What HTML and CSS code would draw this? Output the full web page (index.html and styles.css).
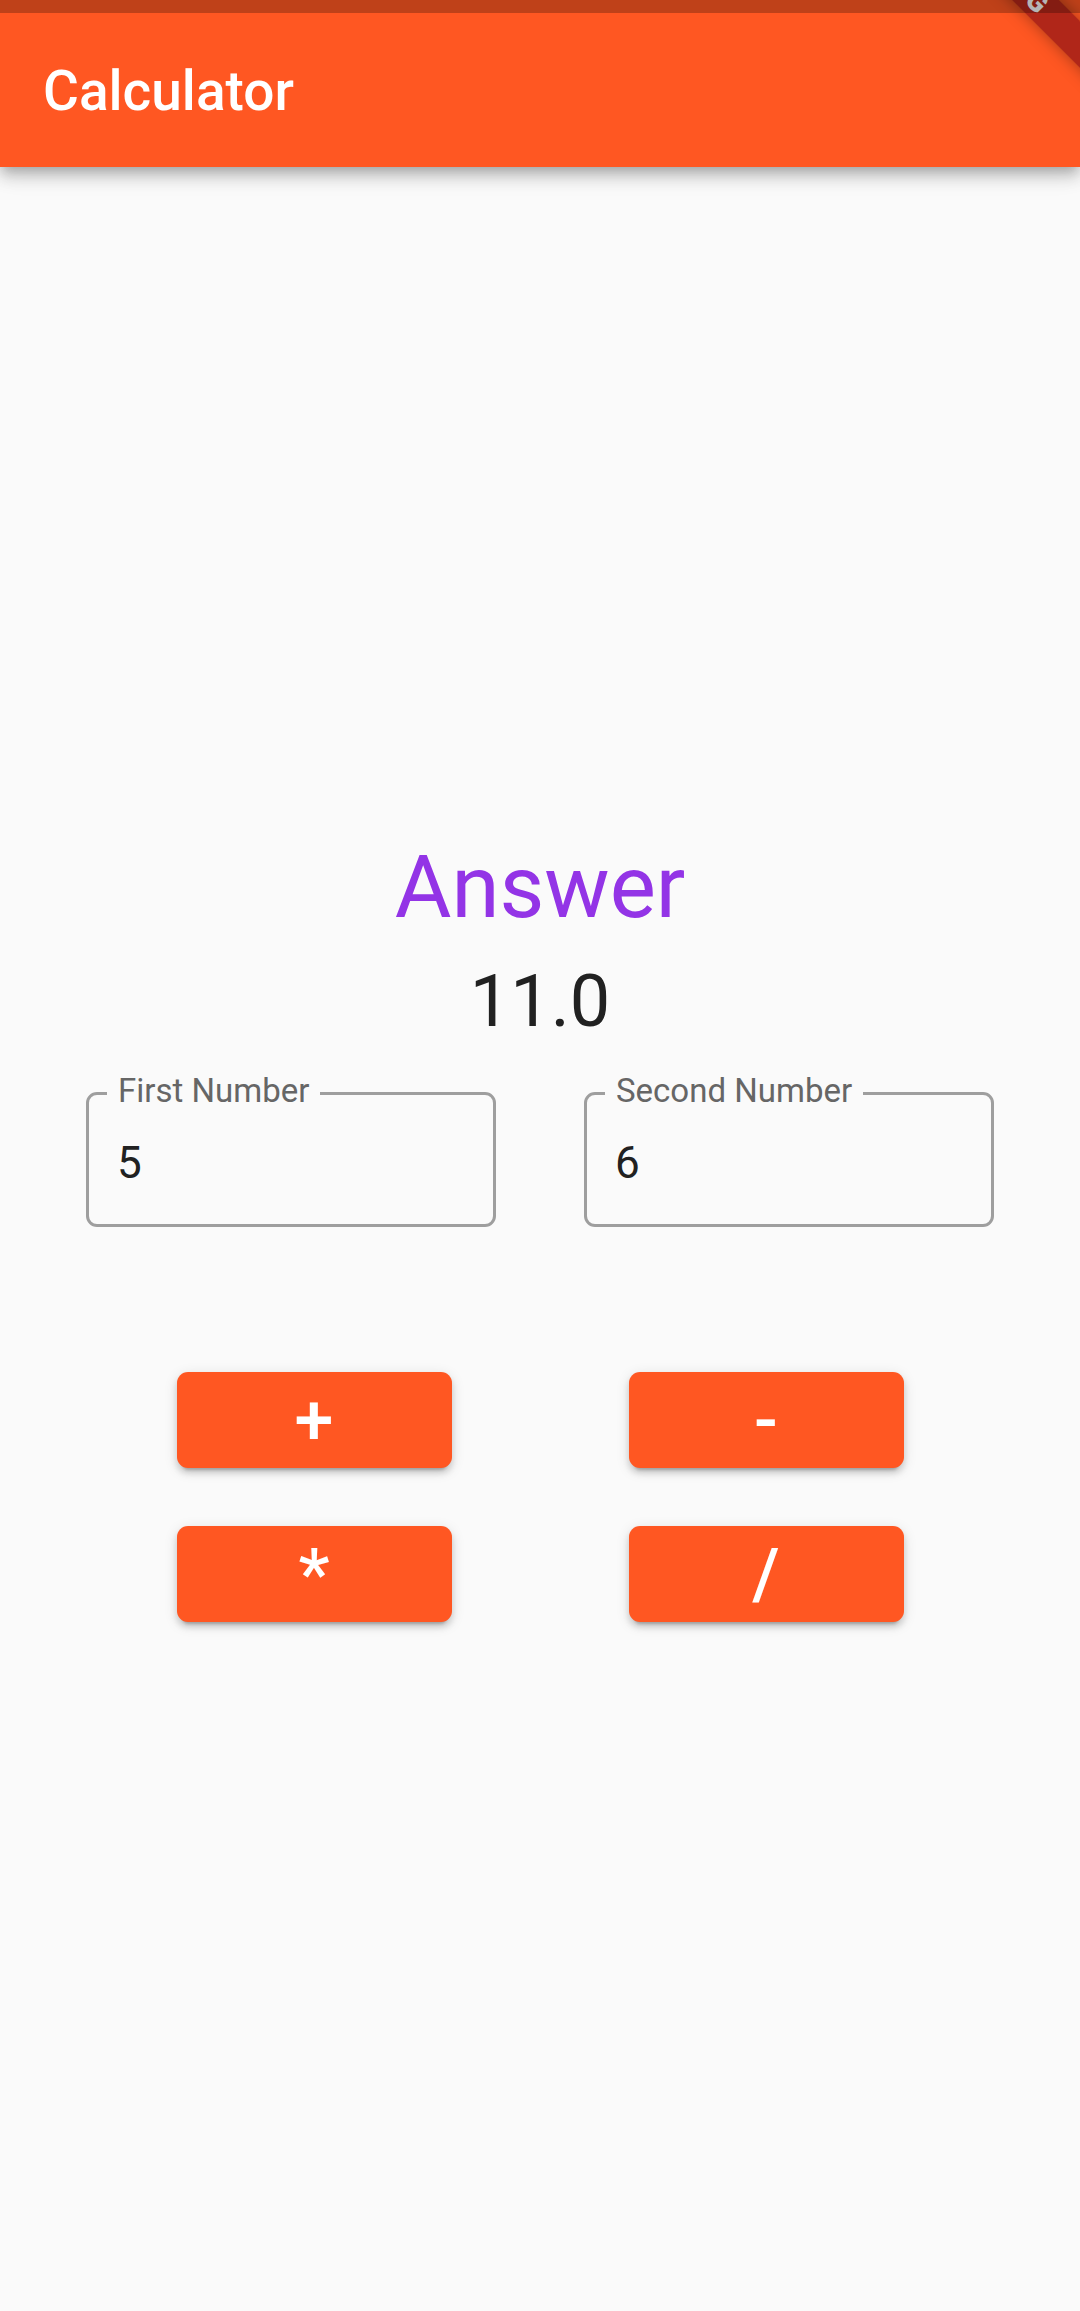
FILE: index.html
```html
<!DOCTYPE html>
<html lang="en">
<head>
<meta charset="utf-8">
<title>Calculator</title>
<link rel="stylesheet" href="styles.css">
</head>
<body>
<div class="screen">
  <header class="app-bar">
    <h1 class="title">Calculator</h1>
  </header>
  <main class="content">
    <div class="answer-label">Answer</div>
    <div class="answer-value">11.0</div>
    <div class="fields">
      <div class="field">
        <span class="field-label">First Number</span>
        <span class="field-value">5</span>
      </div>
      <div class="field">
        <span class="field-label">Second Number</span>
        <span class="field-value">6</span>
      </div>
    </div>
    <div class="buttons">
      <button class="op">+</button>
      <button class="op">-</button>
      <button class="op">*</button>
      <button class="op">/</button>
    </div>
  </main>
  <div class="debug-banner"><span>DEBUG</span></div>
  <div class="status-scrim"></div>
</div>
</body>
</html>
```
FILE: styles.css
```css
html, body {
  margin: 0;
  padding: 0;
  background: #fafafa;
}

.screen {
  position: relative;
  width: 1080px;
  height: 2311px;
  overflow: hidden;
  background: #fafafa;
  font-family: Roboto, "Noto Sans", "Liberation Sans", sans-serif;
}

.app-bar {
  position: relative;
  z-index: 2;
  height: 154px;
  padding-top: 13px;
  background: #ff5722;
  display: flex;
  align-items: center;
  padding-left: 43px;
  box-shadow: 0 5px 11px -3px rgba(0, 0, 0, 0.2),
              0 11px 14px 0 rgba(0, 0, 0, 0.14),
              0 3px 27px 0 rgba(0, 0, 0, 0.12);
}

.title {
  margin: 0;
  color: #ffffff;
  font-size: 55px;
  font-weight: 500;
  line-height: 1;
  padding-top: 2px;
}

.content {
  display: flex;
  flex-direction: column;
  align-items: center;
  padding-top: 668px;
}

.answer-label {
  font-size: 87px;
  line-height: 104px;
  color: #9334e6;
  font-weight: 400;
}

.answer-value {
  margin-top: 21px;
  font-size: 72px;
  line-height: 84px;
  color: #212121;
  font-weight: 400;
}

.fields {
  margin-top: 48px;
  display: flex;
  gap: 88px;
}

.field {
  position: relative;
  box-sizing: border-box;
  width: 410px;
  height: 135px;
  border: 3px solid #9e9e9e;
  border-radius: 11px;
  display: flex;
  align-items: center;
  padding: 6px 0 0 28px;
}

.field-label {
  position: absolute;
  top: -24px;
  left: 18px;
  padding: 0 11px;
  background: #fafafa;
  font-size: 33px;
  line-height: 39px;
  color: #666666;
}

.field-value {
  font-size: 44px;
  line-height: 52px;
  color: #212121;
}

.buttons {
  margin-top: 145px;
  display: grid;
  grid-template-columns: 275px 275px;
  grid-auto-rows: 96px;
  column-gap: 177px;
  row-gap: 58px;
}

.op {
  border: none;
  margin: 0;
  padding: 0;
  border-radius: 11px;
  background: #ff5722;
  color: #ffffff;
  font-family: Roboto, "Noto Sans", "Liberation Sans", sans-serif;
  font-size: 70px;
  font-weight: 500;
  line-height: 1;
  display: flex;
  align-items: center;
  justify-content: center;
  box-shadow: 0 8px 3px -6px rgba(0, 0, 0, 0.2),
              0 5px 6px 0 rgba(0, 0, 0, 0.14),
              0 3px 14px 0 rgba(0, 0, 0, 0.12);
}

.debug-banner {
  position: absolute;
  z-index: 3;
  left: 852px;
  top: -40px;
  width: 320px;
  height: 33px;
  transform: rotate(45deg);
  background: rgba(165, 32, 24, 0.88);
  box-shadow: 0 0 16px rgba(0, 0, 0, 0.35);
  display: flex;
  align-items: center;
  justify-content: center;
}

.debug-banner span {
  color: #f2f2f2;
  font-size: 28px;
  font-weight: 900;
  line-height: 33px;
}

.status-scrim {
  position: absolute;
  z-index: 4;
  top: 0;
  left: 0;
  width: 1080px;
  height: 13px;
  background: rgba(0, 0, 0, 0.25);
}
```
